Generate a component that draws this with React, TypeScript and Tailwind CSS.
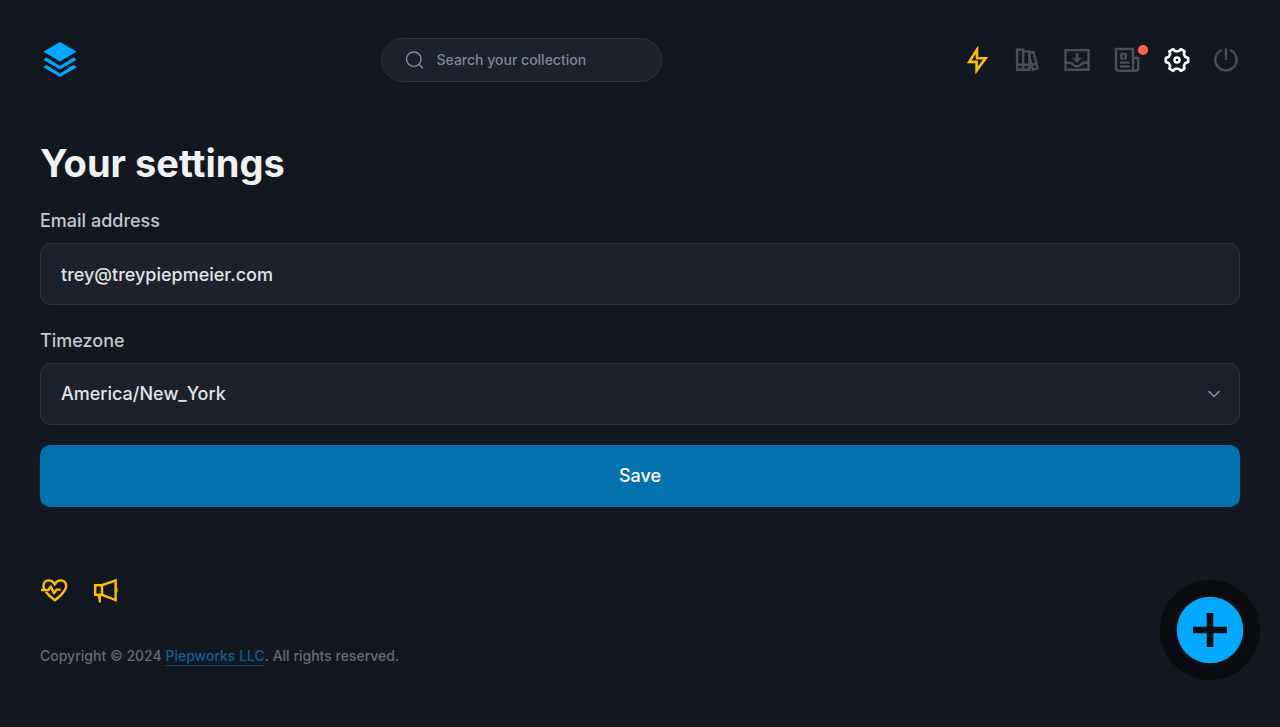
import type { ReactNode } from "react";

type IconProps = { children: ReactNode; className?: string };

function Icon({ children, className = "" }: IconProps) {
  return (
    <svg
      viewBox="0 0 28 28"
      className={`block size-7 ${className}`}
      fill="none"
      stroke="currentColor"
      strokeWidth="2.6"
      strokeMiterlimit="8"
      aria-hidden="true"
    >
      {children}
    </svg>
  );
}

function NavLink({ label, className, children }: { label: string; className: string; children: ReactNode }) {
  return (
    <a href="#" aria-label={label} className={`relative block ${className}`}>
      {children}
    </a>
  );
}

function Header() {
  return (
    <header className="flex items-center justify-between">
      <a href="#" aria-label="Home" className="block text-[#01aaff]">
        <svg viewBox="0 0 40 40" className="block size-10" fill="currentColor" aria-hidden="true">
          <path d="M20 2 36 11.2V12L20 21.6 4 12V11.2Z" />
          <path d="M4 19.2 6.6 17.6 20 26 33.4 17.6 36 19.2V20L20 29.6 4 20Z" />
          <path d="M4 26.6 6.6 25 20 33.4 33.4 25 36 26.6V27.4L20 37 4 27.4Z" />
        </svg>
      </a>

      <label className="flex h-11 w-[281px] items-center gap-3 rounded-full border border-[#2a3140] bg-[#1c212c] px-[23px] text-[#8891a4]">
        <svg viewBox="0 0 20 20" className="size-5 shrink-0" fill="none" stroke="currentColor" strokeWidth="1.4" strokeLinecap="round" aria-hidden="true">
          <circle cx="8.8" cy="9.2" r="7.2" />
          <path d="m14 14.4 3.6 3.6" />
        </svg>
        <input
          type="search"
          aria-label="Search your collection"
          placeholder="Search your collection"
          className="w-full min-w-0 bg-transparent text-sm font-medium outline-none placeholder:text-[#7f889a]"
        />
      </label>

      <nav className="flex items-center gap-[22px]">
        <NavLink label="Activity" className="text-[#ffbf00]">
          <Icon>
            <path d="M15 3.6V12.2H23.6L14.6 24.6V15.9H7.2Z" />
          </Icon>
        </NavLink>
        <NavLink label="Library" className="text-[#4b4f58]">
          <Icon>
            <path d="M5.1 3.8H11.2V23.7H5.1ZM11.2 5.4H17.4V23.7H11.2ZM5.1 18.7H17.4" strokeWidth="2.4" />
            <path d="M17.4 6.9 21.4 6.1 25.6 22.3 20.8 23.5 17.2 9.5M19.7 18.9 24.7 17.7" strokeWidth="2.4" />
          </Icon>
        </NavLink>
        <NavLink label="Inbox" className="text-[#4b4f58]">
          <Icon>
            <path
              d="M3.5 4.1H26.5V23.8H3.5ZM3.5 16.8H8.6C10.4 16.8 10.6 20.2 15 20.2 19.4 20.2 19.6 16.8 21.4 16.8H26.5M15 7V13.5"
              strokeWidth="2.4"
            />
            <path d="M10 11.8H20L15 16.8Z" fill="currentColor" stroke="none" />
          </Icon>
        </NavLink>
        <NavLink label="News" className="text-[#4b4f58]">
          <Icon>
            <path
              d="M21 21.8V3H4V21.8Q4 24.8 7 24.8H23.4Q26.2 24.8 26.2 22V12H21V22.2Q21 24.8 23.6 24.8"
              strokeWidth="2.4"
            />
            <path d="M9.3 7.9H13.9V12.5H9.3ZM7.9 16.6H17.6M7.9 20.4H17.6" strokeWidth="2.2" />
          </Icon>
          <span className="absolute -right-2 -top-px size-2.5 rounded-full bg-[#ff6347]" />
        </NavLink>
        <NavLink label="Settings" className="text-white">
          <Icon>
            <path
              d="M13.4 5.2H16.6L18.9 3.2 22.6 5.4 21.8 8.2 23.4 11 26.2 12V16L23.4 17 21.8 19.8 22.6 22.6 18.9 24.8 16.6 22.8H13.4L11.1 24.8 7.4 22.6 8.2 19.8 6.6 17 3.8 16V12L6.6 11 8.2 8.2 7.4 5.4 11.1 3.2Z"
              strokeLinejoin="round"
            />
            <circle cx="15" cy="14" r="2.5" />
          </Icon>
        </NavLink>
        <NavLink label="Sign out" className="text-[#4b4f58]">
          <Icon>
            <path d="M14 2.2V14M18 4A10.6 10.6 0 1 1 10 4" strokeWidth="2.4" />
          </Icon>
        </NavLink>
      </nav>
    </header>
  );
}

function SettingsForm() {
  return (
    <form className="mt-[18px] text-lg font-medium" onSubmit={(event) => event.preventDefault()}>
      <label htmlFor="email" className="block leading-[30px]">
        Email address
      </label>
      <input
        id="email"
        type="email"
        defaultValue="trey@treypiepmeier.com"
        className="mt-[7px] block h-[62px] w-full rounded-[10px] border border-[#2a3140] bg-[#1c212c] px-5 text-[#e0e3e7] outline-none"
      />
      <label htmlFor="timezone" className="mt-[21px] block leading-[30px]">
        Timezone
      </label>
      <div className="relative mt-[7px]">
        <select
          id="timezone"
          className="block h-[62px] w-full appearance-none rounded-[10px] border border-[#2a3140] bg-[#1c212c] px-5 text-[#e0e3e7] outline-none"
        >
          <option>America/New_York</option>
        </select>
        <svg
          viewBox="0 0 20 20"
          className="pointer-events-none absolute right-4 top-[21px] size-5"
          fill="none"
          stroke="#8891a4"
          strokeWidth="1.6"
          strokeLinecap="round"
          strokeLinejoin="round"
          aria-hidden="true"
        >
          <path d="m5 7.5 5 5 5-5" />
        </svg>
      </div>
      <button type="submit" className="mt-5 block h-[62px] w-full rounded-[10px] bg-[#0172ad] text-white">
        Save
      </button>
    </form>
  );
}

function Footer() {
  return (
    <footer className="mt-[70px] text-[#676c76]">
      <div className="flex gap-6 text-[#ffbf00]">
        <a href="#" aria-label="Status">
          <Icon>
            <path
              d="M4.3 12.4C2.6 8.5 3.8 3.4 8.6 3.4 11.4 3.4 13.3 5 14.7 7.2 16.1 5 18.3 3.4 20.8 3.4 25 3.4 28 8 24.8 13.2 23 16.2 18.6 20.6 15 23.2 11.5 20.8 8 17.8 5.8 14.8"
              strokeWidth="2.4"
            />
            <path d="M1 13H8.4L10.8 9.4 14 16.2 16.6 12.6H20.6" strokeWidth="2.4" strokeLinejoin="round" />
          </Icon>
        </a>
        <a href="#" aria-label="Announcements">
          <Icon>
            <path d="M3.2 8.2H10L23.6 3.4V23L10 17.8H3.2ZM10 8.2V17.8M7.8 17.8V25.6" strokeWidth="2.4" />
            <path d="M6 18 8 22M24.4 11.2V15.2" strokeWidth="2.2" />
          </Icon>
        </a>
      </div>
      <p className="mt-[39px] text-sm font-medium leading-6">
        Copyright © 2024{" "}
        <a href="#" className="text-[#0a6296] underline decoration-[#0b4568] underline-offset-4">
          Piepworks LLC
        </a>
        . All rights reserved.
      </p>
    </footer>
  );
}

export default function App() {
  return (
    <div className="min-h-screen bg-[#13171f] px-10 pb-14 pt-[38px] font-['Inter','Liberation_Sans',sans-serif] text-[#c2c7d0]">
      <Header />
      <main className="mt-14">
        <h1 className="text-[38px] font-bold leading-[50px] text-[#f0f1f3]">Your settings</h1>
        <SettingsForm />
      </main>
      <Footer />
      <button
        type="button"
        aria-label="Add to collection"
        className="fixed bottom-[47px] right-5 flex size-[100px] items-center justify-center rounded-full bg-[#0a0c0f]"
      >
        <svg viewBox="0 0 68 68" className="size-[68px]" aria-hidden="true">
          <circle cx="34" cy="34" r="33.3" fill="#01aaff" />
          <path d="M34 17V51M17 34H51" stroke="#0a0c0f" strokeWidth="6.6" />
        </svg>
      </button>
    </div>
  );
}
